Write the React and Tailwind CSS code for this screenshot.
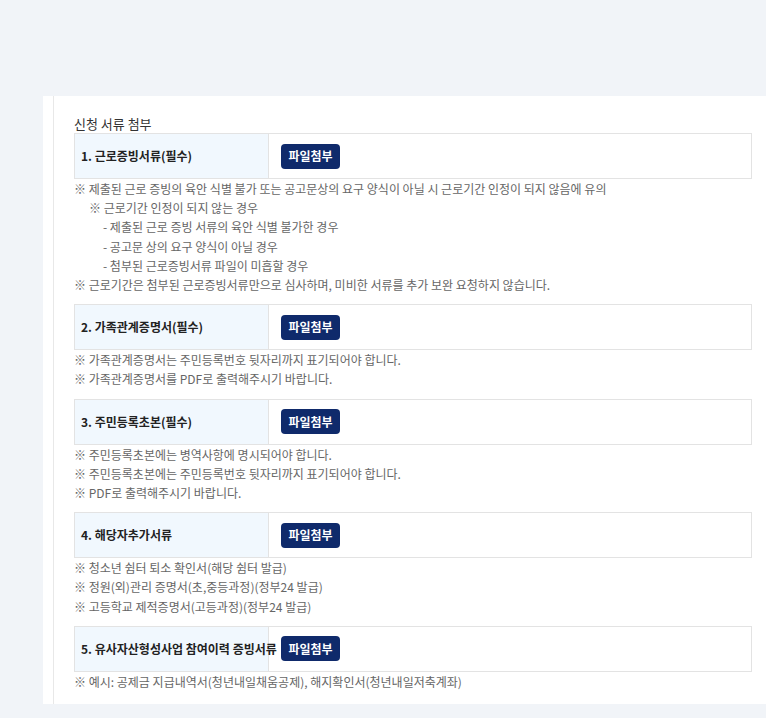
const sections = [
  {
    label: "1. 근로증빙서류(필수)",
    notes: [
      { text: "※ 제출된 근로 증빙의 육안 식별 불가 또는 공고문상의 요구 양식이 아닐 시 근로기간 인정이 되지 않음에 유의", level: 0 },
      { text: "※ 근로기간 인정이 되지 않는 경우", level: 1 },
      { text: "- 제출된 근로 증빙 서류의 육안 식별 불가한 경우", level: 2 },
      { text: "- 공고문 상의 요구 양식이 아닐 경우", level: 2 },
      { text: "- 첨부된 근로증빙서류 파일이 미흡할 경우", level: 2 },
      { text: "※ 근로기간은 첨부된 근로증빙서류만으로 심사하며, 미비한 서류를 추가 보완 요청하지 않습니다.", level: 0 },
    ],
  },
  {
    label: "2. 가족관계증명서(필수)",
    notes: [
      { text: "※ 가족관계증명서는 주민등록번호 뒷자리까지 표기되어야 합니다.", level: 0 },
      { text: "※ 가족관계증명서를 PDF로 출력해주시기 바랍니다.", level: 0 },
    ],
  },
  {
    label: "3. 주민등록초본(필수)",
    notes: [
      { text: "※ 주민등록초본에는 병역사항에 명시되어야 합니다.", level: 0 },
      { text: "※ 주민등록초본에는 주민등록번호 뒷자리까지 표기되어야 합니다.", level: 0 },
      { text: "※ PDF로 출력해주시기 바랍니다.", level: 0 },
    ],
  },
  {
    label: "4. 해당자추가서류",
    notes: [
      { text: "※ 청소년 쉼터 퇴소 확인서(해당 쉼터 발급)", level: 0 },
      { text: "※ 정원(외)관리 증명서(초,중등과정)(정부24 발급)", level: 0 },
      { text: "※ 고등학교 제적증명서(고등과정)(정부24 발급)", level: 0 },
    ],
  },
  {
    label: "5. 유사자산형성사업 참여이력 증빙서류",
    notes: [
      { text: "※ 예시: 공제금 지급내역서(청년내일채움공제), 해지확인서(청년내일저축계좌)", level: 0 },
    ],
  },
];

const indent = ["pl-0", "pl-[15px]", "pl-[29px]"];

export default function App() {
  return (
    <div
      className="min-h-[718px] bg-[#f1f4f8] pt-[96px] pl-[43px] pb-[15px]"
      style={{ fontFamily: '"Noto Sans CJK KR", "Noto Sans", sans-serif' }}
    >
      <div className="bg-white pl-[10px]">
        <div className="border-l border-[#e8e8e8] pl-[20px] pr-[14px] pt-[19px] pb-[13px]">
          <h2 className="text-[13px] leading-[18px] text-[#333]">신청 서류 첨부</h2>

          {sections.map((s, i) => (
            <div key={i} className={i < sections.length - 1 ? "mb-[10px]" : ""}>
              <div className="flex h-[46px] border border-[#e3e3e3]">
                <div className="w-[194px] shrink-0 bg-[#f1f8fe] border-r border-[#e3e3e3] flex items-center pl-[6px] whitespace-nowrap">
                  <span className="text-[12px] font-bold text-[#222] relative z-10">{s.label}</span>
                </div>
                <div className="flex items-center pl-[12px]">
                  <button className="h-[25px] w-[59px] rounded-[4px] bg-[#0f2a6b] text-white text-[12px] font-bold">
                    파일첨부
                  </button>
                </div>
              </div>
              <div className="text-[12px] leading-[19.2px] text-[#666]">
                {s.notes.map((n, j) => (
                  <p key={j} className={indent[n.level]}>{n.text}</p>
                ))}
              </div>
            </div>
          ))}
        </div>
      </div>
    </div>
  );
}
